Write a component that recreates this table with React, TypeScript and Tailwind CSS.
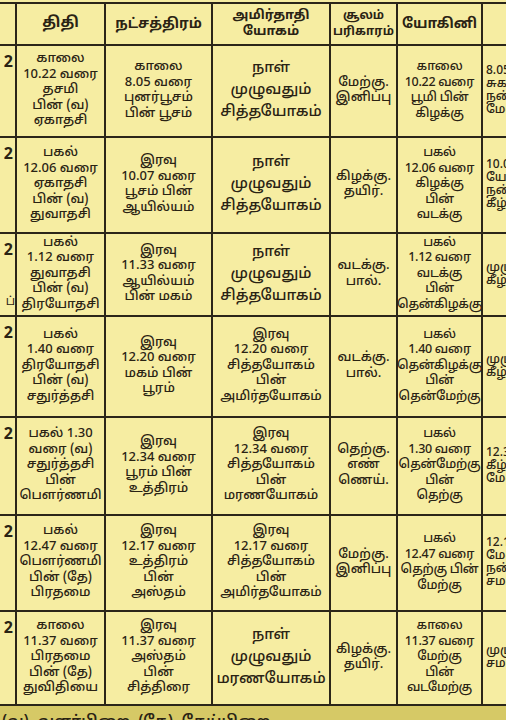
import React from "react";

type Row = {
  d: string;
  dExtra?: string;
  thithi: string[];
  star: string[];
  yogam: string[];
  soolam: string[];
  yogini: string[];
  last: string[];
};

const rows: Row[] = [
  {
    d: "2",
    thithi: ["காலை", "10.22 வரை", "தசமி", "பின் (வ)", "ஏகாதசி"],
    star: ["காலை", "8.05 வரை", "புனர்பூசம்", "பின் பூசம்"],
    yogam: ["நாள்", "முழுவதும்", "சித்தயோகம்"],
    soolam: ["மேற்கு.", "இனிப்பு"],
    yogini: ["காலை", "10.22 வரை", "பூமி பின்", "கிழக்கு"],
    last: ["8.05", "சுகம்", "நன்று", "மேஷம்"],
  },
  {
    d: "2",
    thithi: ["பகல்", "12.06 வரை", "ஏகாதசி", "பின் (வ)", "துவாதசி"],
    star: ["இரவு", "10.07 வரை", "பூசம் பின்", "ஆயில்யம்"],
    yogam: ["நாள்", "முழுவதும்", "சித்தயோகம்"],
    soolam: ["கிழக்கு.", "தயிர்."],
    yogini: ["பகல்", "12.06 வரை", "கிழக்கு", "பின்", "வடக்கு"],
    last: ["10.07", "யோகம்", "நன்று", "கீழ்"],
  },
  {
    d: "2",
    dExtra: "ப்",
    thithi: ["பகல்", "1.12 வரை", "துவாதசி", "பின் (வ)", "திரயோதசி"],
    star: ["இரவு", "11.33 வரை", "ஆயில்யம்", "பின் மகம்"],
    yogam: ["நாள்", "முழுவதும்", "சித்தயோகம்"],
    soolam: ["வடக்கு.", "பால்."],
    yogini: ["பகல்", "1.12 வரை", "வடக்கு", "பின்", "தென்கிழக்கு"],
    last: ["முழு", "கீழ்"],
  },
  {
    d: "2",
    thithi: ["பகல்", "1.40 வரை", "திரயோதசி", "பின் (வ)", "சதுர்த்தசி"],
    star: ["இரவு", "12.20 வரை", "மகம் பின்", "பூரம்"],
    yogam: ["இரவு", "12.20 வரை", "சித்தயோகம்", "பின்", "அமிர்தயோகம்"],
    soolam: ["வடக்கு.", "பால்."],
    yogini: ["பகல்", "1.40 வரை", "தென்கிழக்கு", "பின்", "தென்மேற்கு"],
    last: ["முழு", "கீழ்"],
  },
  {
    d: "2",
    thithi: ["பகல் 1.30", "வரை (வ)", "சதுர்த்தசி", "பின்", "பௌர்ணமி"],
    star: ["இரவு", "12.34 வரை", "பூரம் பின்", "உத்திரம்"],
    yogam: ["இரவு", "12.34 வரை", "சித்தயோகம்", "பின்", "மரணயோகம்"],
    soolam: ["தெற்கு.", "எண்", "ணெய்."],
    yogini: ["பகல்", "1.30 வரை", "தென்மேற்கு", "பின்", "தெற்கு"],
    last: ["12.34", "கீழ்", "மேல்"],
  },
  {
    d: "2",
    thithi: ["பகல்", "12.47 வரை", "பௌர்ணமி", "பின் (தே)", "பிரதமை"],
    star: ["இரவு", "12.17 வரை", "உத்திரம்", "பின்", "அஸ்தம்"],
    yogam: ["இரவு", "12.17 வரை", "சித்தயோகம்", "பின்", "அமிர்தயோகம்"],
    soolam: ["மேற்கு.", "இனிப்பு"],
    yogini: ["பகல்", "12.47 வரை", "தெற்கு பின்", "மேற்கு"],
    last: ["12.17", "மேல்", "நன்று", "சமம்"],
  },
  {
    d: "2",
    thithi: ["காலை", "11.37 வரை", "பிரதமை", "பின் (தே)", "துவிதியை"],
    star: ["இரவு", "11.37 வரை", "அஸ்தம்", "பின்", "சித்திரை"],
    yogam: ["நாள்", "முழுவதும்", "மரணயோகம்"],
    soolam: ["கிழக்கு.", "தயிர்."],
    yogini: ["காலை", "11.37 வரை", "மேற்கு", "பின்", "வடமேற்கு"],
    last: ["முழு", "சமம்"],
  },
];

function Cell({ lines, big, small }: { lines: string[]; big?: boolean; small?: boolean }) {
  const cls = big
    ? "whitespace-nowrap text-[15px] leading-[22px]"
    : small
    ? "whitespace-nowrap text-[12.5px] leading-[15.5px] tracking-[-0.3px]"
    : "whitespace-nowrap text-[13px] leading-[15.5px]";
  return (
    <div className="flex flex-col items-center justify-center bg-[#f6eda2] text-center">
      {lines.map((l, i) => (
        <div key={i} className={cls}>
          {l}
        </div>
      ))}
    </div>
  );
}

export default function App() {
  return (
    <div
      className="relative h-[720px] w-[506px] overflow-hidden bg-[#f6eda2] text-[#2a2314]"
      style={{ fontFamily: '"Noto Sans Tamil", "Lohit Tamil", "Latha", "Noto Sans", "Liberation Sans", sans-serif' }}
    >
      <div className="pt-[2px]">
        <div className="grid w-[563px] grid-cols-[15px_87px_105px_116px_65px_83px_80px] grid-rows-[40px_90px_94px_81px_99px_96px_94px_92px] gap-[2px] bg-[#2b2619] py-[2px] font-medium">
          <div className="bg-[#f6eda2]" />
          <div className="flex items-center justify-center bg-[#f6eda2] text-[15px] font-bold">திதி</div>
          <div className="flex items-center justify-center bg-[#f6eda2] text-[14px] font-bold">நட்சத்திரம்</div>
          <div className="flex flex-col items-center justify-center bg-[#f6eda2] text-[13px] font-bold leading-[16px]">
            <span>அமிர்தாதி</span>
            <span>யோகம்</span>
          </div>
          <div className="flex flex-col items-center justify-center bg-[#f6eda2] text-[12px] font-bold leading-[16px]">
            <span>சூலம்</span>
            <span>பரிகாரம்</span>
          </div>
          <div className="flex items-center justify-center bg-[#f6eda2] text-[14px] font-bold">யோகினி</div>
          <div className="bg-[#f6eda2]" />

          {rows.map((r, i) => (
            <React.Fragment key={i}>
              <div className="flex flex-col items-end justify-between bg-[#f6eda2] pb-[4px] pt-[8px] text-[16px] font-bold leading-[18px]">
                <span className="pr-[2px]">{r.d}</span>
                <span className="text-[12px] font-normal">{r.dExtra ?? ""}</span>
              </div>
              <Cell lines={r.thithi} />
              <Cell lines={r.star} />
              <Cell lines={r.yogam} big={r.yogam.length === 3} />
              <Cell lines={r.soolam} />
              <Cell lines={r.yogini} small />
              <div className="flex flex-col items-start justify-center bg-[#f6eda2] pl-[3px] text-[12px] leading-[13px]">
                {r.last.map((l, j) => (
                  <span key={j} className="whitespace-nowrap">
                    {l}
                  </span>
                ))}
              </div>
            </React.Fragment>
          ))}
        </div>
      </div>
      <div className="h-[20px] whitespace-nowrap bg-[#d6c966] pl-[2px] pt-[8px] text-[15px] font-semibold leading-[18px]">
        (வ)- வளர்பிறை, (தே)- தேய்பிறை
      </div>
    </div>
  );
}
